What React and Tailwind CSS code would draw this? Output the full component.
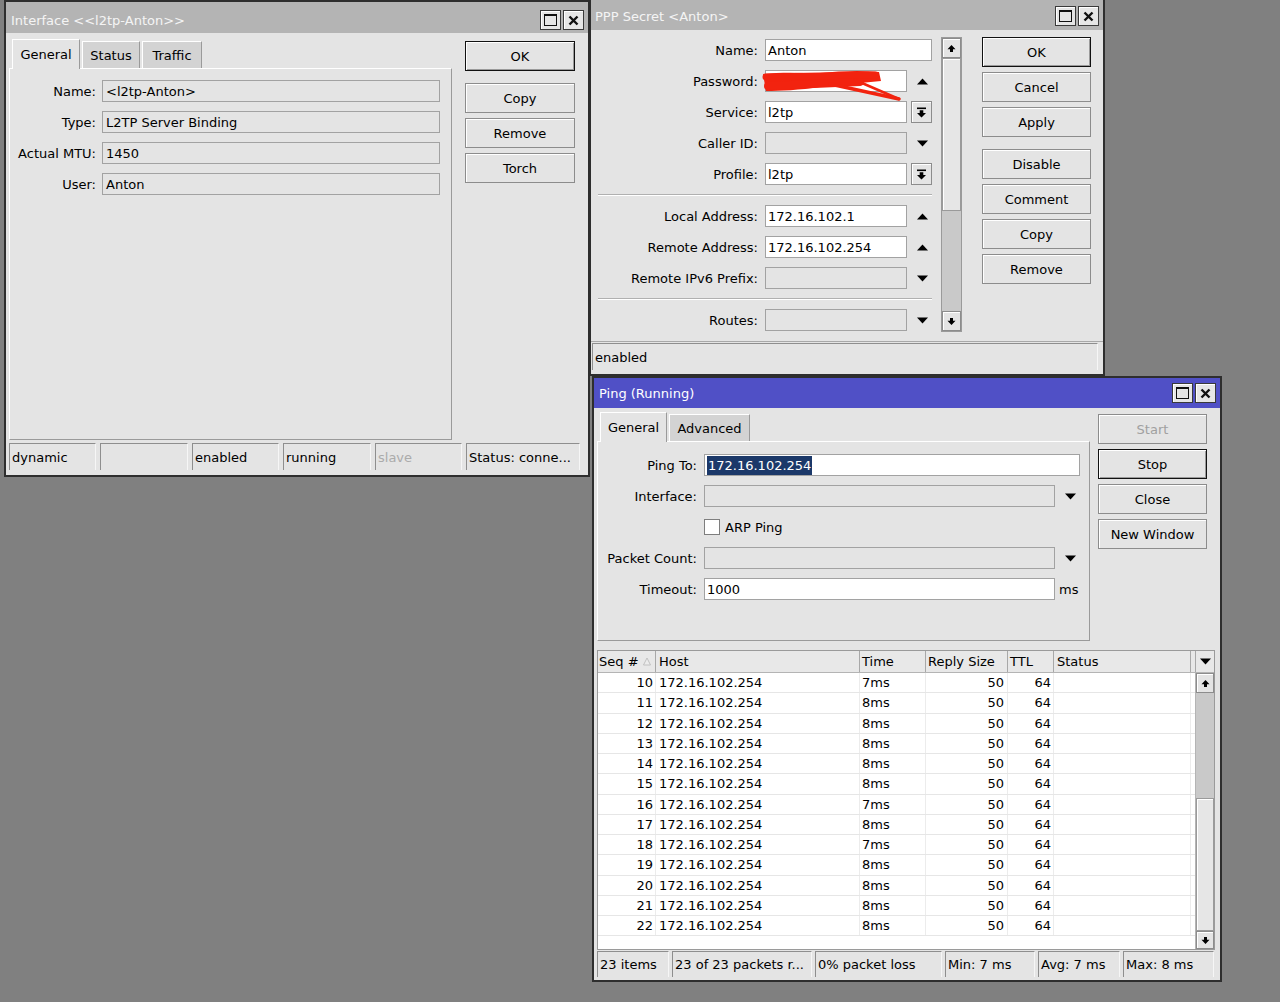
import React from "react";

function TitleButtons() {
  return (
    <div className="flex gap-[2px]">
      <div className="w-[21px] h-[20px] border border-[#3a3a3a] bg-[#e6e6e6] shadow-[inset_1px_1px_0_#ffffff] flex items-center justify-center">
        <div className="w-[13px] h-[12px] border-[1.5px] border-[#111111] border-t-[2px]" />
      </div>
      <div className="w-[21px] h-[20px] border border-[#3a3a3a] bg-[#e6e6e6] shadow-[inset_1px_1px_0_#ffffff] flex items-center justify-center">
        <svg width="11" height="11" viewBox="0 0 11 11">
          <path d="M1.5 1.5L9.5 9.5M9.5 1.5L1.5 9.5" stroke="#111" strokeWidth="2.4" />
        </svg>
      </div>
    </div>
  );
}

function Btn({ children, focus, disabled, mt = "" }) {
  return (
    <div
      className={`h-[30px] shrink-0 flex items-center justify-center bg-[#e4e4e4] border ${
        focus
          ? "border-[#111111] shadow-[inset_1px_1px_0_#ffffff,inset_-1px_-1px_0_#9a9a9a]"
          : "border-[#8c8c8c] shadow-[inset_1px_1px_0_#ffffff]"
      } ${disabled ? "text-[#a0a0a0]" : "text-black"} ${mt}`}
    >
      {children}
    </div>
  );
}

function Field({ w, white, children, cls = "" }) {
  return (
    <div
      className={`${w} h-[22px] shrink-0 border border-[#a2a2a2] ${
        white ? "bg-white" : "bg-[#e4e4e4]"
      } flex items-center pl-[2px] whitespace-nowrap overflow-hidden ${cls}`}
    >
      {children}
    </div>
  );
}

function Up() {
  return (
    <svg width="11" height="7" viewBox="0 0 11 7">
      <path d="M0 6.5L5.5 0.5L11 6.5Z" fill="#000" />
    </svg>
  );
}
function Down() {
  return (
    <svg width="11" height="7" viewBox="0 0 11 7">
      <path d="M0 0.5L5.5 6.5L11 0.5Z" fill="#000" />
    </svg>
  );
}
function DropBox() {
  return (
    <div className="ml-[4px] w-[21px] h-[22px] shrink-0 border border-[#8c8c8c] bg-[#e4e4e4] shadow-[inset_1px_1px_0_#ffffff] flex items-center justify-center">
      <svg width="11" height="11" viewBox="0 0 11 11">
        <rect x="1" y="0.5" width="9" height="1.6" fill="#000" />
        <path d="M3.7 3.2H7.3V6H10L5.5 10.5L1 6H3.7Z" fill="#000" />
      </svg>
    </div>
  );
}
function ScrollBtn({ up, h = "h-[20px]" }) {
  return (
    <div className={`w-full ${h} shrink-0 border border-[#8c8c8c] bg-[#e4e4e4] shadow-[inset_1px_1px_0_#ffffff] flex items-center justify-center`}>
      <svg width="9" height="9" viewBox="0 0 9 9">
        {up ? (
          <path d="M4.5 1L8.5 5.3H6V8H3V5.3H0.5Z" fill="#000" />
        ) : (
          <path d="M4.5 8L8.5 3.7H6V1H3V3.7H0.5Z" fill="#000" />
        )}
      </svg>
    </div>
  );
}

function Cell({ w, children, muted, h = "h-[27px]" }) {
  return (
    <div
      className={`${w} ${h} shrink-0 border-l border-t border-r border-[#8e8e8e] border-r-[#f6f6f6] flex items-center pl-[2px] whitespace-nowrap overflow-hidden ${
        muted ? "text-[#ababab]" : ""
      }`}
    >
      {children}
    </div>
  );
}

function TabOn({ w, children }) {
  return (
    <div className={`${w} h-[30px] shrink-0 bg-[#e4e4e4] border-t border-l border-r border-white border-r-[#9a9a9a] flex items-center justify-center relative z-10 -mb-px`}>
      {children}
    </div>
  );
}
function TabOff({ w, children }) {
  return (
    <div className={`${w} h-[27px] shrink-0 bg-[#d3d3d3] border-t border-l border-r border-white border-r-[#9a9a9a] flex items-center justify-center`}>
      {children}
    </div>
  );
}

const pings = [
  [10, "7ms"], [11, "8ms"], [12, "8ms"], [13, "8ms"], [14, "8ms"], [15, "8ms"], [16, "7ms"],
  [17, "8ms"], [18, "7ms"], [19, "8ms"], [20, "8ms"], [21, "8ms"], [22, "8ms"],
];

export default function App() {
  return (
    <div className="relative w-[1280px] h-[1002px] overflow-hidden bg-[#808080] font-['DejaVu_Sans',Verdana,sans-serif] text-[13px] text-black leading-none">
      {/* Window 1: Interface */}
      <div className="absolute left-[4px] top-0 w-[586px] h-[477px] border-2 border-[#2e2e2e] bg-[#e4e4e4] flex flex-col">
        <div className="h-[31px] shrink-0 bg-[#b4b4b4] flex items-center justify-between pt-[5px] pl-[5px] pr-[4px] text-[#f4f4f4]">
          <span>Interface &lt;&lt;l2tp-Anton&gt;&gt;</span>
          <TitleButtons />
        </div>
        <div className="flex-1 flex flex-col pl-[3px]">
          <div className="flex items-start">
            <div className="w-[443px] flex flex-col mt-[5px]">
              <div className="h-[30px] flex items-end gap-[2px] pl-[3px]">
                <TabOn w="w-[68px]">General</TabOn>
                <TabOff w="w-[58px]">Status</TabOff>
                <TabOff w="w-[60px]">Traffic</TabOff>
              </div>
              <div className="h-[372px] border border-white border-r-[#9a9a9a] border-b-[#9a9a9a] flex flex-col pt-[11px] gap-[9px]">
                {[
                  ["Name:", "<l2tp-Anton>"],
                  ["Type:", "L2TP Server Binding"],
                  ["Actual MTU:", "1450"],
                  ["User:", "Anton"],
                ].map(([l, v]) => (
                  <div key={l} className="flex items-center h-[22px]">
                    <div className="w-[86px] text-right shrink-0">{l}</div>
                    <Field w="w-[338px]" cls="ml-[6px] pl-[3px]">{v}</Field>
                  </div>
                ))}
              </div>
            </div>
            <div className="ml-[13px] w-[110px] flex flex-col mt-[8px]">
              <Btn focus>OK</Btn>
              <Btn mt="mt-[12px]">Copy</Btn>
              <Btn mt="mt-[5px]">Remove</Btn>
              <Btn mt="mt-[5px]">Torch</Btn>
            </div>
          </div>
          <div className="flex gap-[4px] mt-[3px]">
            <Cell w="w-[87px]">dynamic</Cell>
            <Cell w="w-[88px]"></Cell>
            <Cell w="w-[87px]">enabled</Cell>
            <Cell w="w-[88px]">running</Cell>
            <Cell w="w-[87px]" muted>slave</Cell>
            <Cell w="w-[114px]">Status: conne...</Cell>
          </div>
        </div>
      </div>

      {/* Window 2: PPP Secret */}
      <div className="absolute left-[589px] top-[-2px] w-[516px] h-[378px] border-2 border-[#2e2e2e] bg-[#e4e4e4] flex flex-col">
        <div className="h-[30px] shrink-0 bg-[#b4b4b4] flex items-center justify-between pt-[2px] pl-[4px] pr-[4px] text-[#f4f4f4]">
          <span>PPP Secret &lt;Anton&gt;</span>
          <TitleButtons />
        </div>
        <div className="flex-1 flex flex-col">
          <div className="h-[311px] shrink-0 flex items-start">
            <div className="w-[346px] flex flex-col">
              <div className="flex items-center h-[22px] mt-[9px]">
                <div className="w-[167px] text-right shrink-0">Name:</div>
                <Field w="w-[167px]" white cls="ml-[7px]">Anton</Field>
              </div>
              <div className="flex items-center h-[22px] mt-[9px]">
                <div className="w-[167px] text-right shrink-0">Password:</div>
                <div className="relative ml-[7px]">
                  <Field w="w-[142px]" white></Field>
                  <svg className="absolute left-[-5px] top-[-2px] overflow-visible" width="145" height="35" viewBox="0 0 145 35">
                    <path d="M3 6 C20 4, 40 5, 60 5 C80 3, 100 2, 119 4 L121 13 C100 15, 80 17, 60 19 C40 22, 20 23, 6 23 Z" fill="#f2230f" />
                    <path d="M6 9 L115 7" stroke="#f2230f" strokeWidth="7" fill="none" strokeLinecap="round" />
                    <path d="M8 18 L100 14" stroke="#f2230f" strokeWidth="8" fill="none" strokeLinecap="round" />
                    <path d="M70 16 L139 31" stroke="#f2230f" strokeWidth="3.5" fill="none" strokeLinecap="round" />
                    <path d="M95 12 L139 31" stroke="#f2230f" strokeWidth="2.5" fill="none" strokeLinecap="round" />
                  </svg>
                </div>
                <div className="w-[30px] flex justify-center"><Up /></div>
              </div>
              <div className="flex items-center h-[22px] mt-[9px]">
                <div className="w-[167px] text-right shrink-0">Service:</div>
                <Field w="w-[142px]" white cls="ml-[7px]">l2tp</Field>
                <DropBox />
              </div>
              <div className="flex items-center h-[22px] mt-[9px]">
                <div className="w-[167px] text-right shrink-0">Caller ID:</div>
                <Field w="w-[142px]" cls="ml-[7px]"></Field>
                <div className="w-[30px] flex justify-center"><Down /></div>
              </div>
              <div className="flex items-center h-[22px] mt-[9px]">
                <div className="w-[167px] text-right shrink-0">Profile:</div>
                <Field w="w-[142px]" white cls="ml-[7px]">l2tp</Field>
                <DropBox />
              </div>
              <div className="ml-[7px] w-[334px] h-[2px] mt-[9px] border-t border-b border-[#b0b0b0] border-b-white" />
              <div className="flex items-center h-[22px] mt-[9px]">
                <div className="w-[167px] text-right shrink-0">Local Address:</div>
                <Field w="w-[142px]" white cls="ml-[7px]">172.16.102.1</Field>
                <div className="w-[30px] flex justify-center"><Up /></div>
              </div>
              <div className="flex items-center h-[22px] mt-[9px]">
                <div className="w-[167px] text-right shrink-0">Remote Address:</div>
                <Field w="w-[142px]" white cls="ml-[7px]">172.16.102.254</Field>
                <div className="w-[30px] flex justify-center"><Up /></div>
              </div>
              <div className="flex items-center h-[22px] mt-[9px]">
                <div className="w-[167px] text-right shrink-0">Remote IPv6 Prefix:</div>
                <Field w="w-[142px]" cls="ml-[7px]"></Field>
                <div className="w-[30px] flex justify-center"><Down /></div>
              </div>
              <div className="ml-[7px] w-[334px] h-[2px] mt-[9px] border-t border-b border-[#b0b0b0] border-b-white" />
              <div className="flex items-center h-[22px] mt-[9px]">
                <div className="w-[167px] text-right shrink-0">Routes:</div>
                <Field w="w-[142px]" cls="ml-[7px]"></Field>
                <div className="w-[30px] flex justify-center"><Down /></div>
              </div>
            </div>
            <div className="ml-[4px] mt-[7px] w-[21px] h-[295px] flex flex-col border border-[#9a9a9a] bg-[#c9c9c9]">
              <ScrollBtn up />
              <div className="h-[153px] shrink-0 border border-[#9a9a9a] bg-[#e6e6e6] shadow-[inset_1px_1px_0_#ffffff]" />
              <div className="flex-1" />
              <ScrollBtn />
            </div>
            <div className="ml-[20px] mt-[7px] w-[109px] flex flex-col">
              <Btn focus>OK</Btn>
              <Btn mt="mt-[5px]">Cancel</Btn>
              <Btn mt="mt-[5px]">Apply</Btn>
              <Btn mt="mt-[12px]">Disable</Btn>
              <Btn mt="mt-[5px]">Comment</Btn>
              <Btn mt="mt-[5px]">Copy</Btn>
              <Btn mt="mt-[5px]">Remove</Btn>
            </div>
          </div>
          <div className="border-t border-[#a8a8a8] pt-[1px] pl-[1px]">
            <Cell w="w-[506px]">enabled</Cell>
          </div>
        </div>
      </div>

      {/* Window 3: Ping */}
      <div className="absolute left-[592px] top-[376px] w-[630px] h-[606px] border-2 border-[#2e2e2e] bg-[#e4e4e4] flex flex-col">
        <div className="h-[30px] shrink-0 bg-[#5050c6] flex items-center justify-between pl-[5px] pr-[4px] text-white">
          <span>Ping (Running)</span>
          <TitleButtons />
        </div>
        <div className="flex-1 flex flex-col pl-[3px]">
          <div className="flex items-start">
            <div className="w-[493px] flex flex-col mt-[3px]">
              <div className="h-[30px] flex items-end gap-[2px] pl-[3px]">
                <TabOn w="w-[67px]">General</TabOn>
                <TabOff w="w-[81px]">Advanced</TabOff>
              </div>
              <div className="h-[200px] border border-white border-r-[#9a9a9a] border-b-[#9a9a9a] flex flex-col pt-[12px] gap-[9px]">
                <div className="flex items-center h-[22px]">
                  <div className="w-[99px] text-right shrink-0">Ping To:</div>
                  <Field w="w-[376px]" white cls="ml-[7px] pl-[1px]">
                    <span className="inline-block h-[19px] leading-[19px] bg-[#1b3869] text-white px-[1px]">172.16.102.254</span>
                  </Field>
                </div>
                <div className="flex items-center h-[22px]">
                  <div className="w-[99px] text-right shrink-0">Interface:</div>
                  <Field w="w-[351px]" cls="ml-[7px]"></Field>
                  <div className="w-[30px] flex justify-center"><Down /></div>
                </div>
                <div className="flex items-center h-[22px]">
                  <div className="w-[99px] shrink-0"></div>
                  <div className="ml-[7px] w-[16px] h-[16px] border border-[#7e7e7e] bg-white" />
                  <span className="ml-[5px]">ARP Ping</span>
                </div>
                <div className="flex items-center h-[22px]">
                  <div className="w-[99px] text-right shrink-0">Packet Count:</div>
                  <Field w="w-[351px]" cls="ml-[7px]"></Field>
                  <div className="w-[30px] flex justify-center"><Down /></div>
                </div>
                <div className="flex items-center h-[22px]">
                  <div className="w-[99px] text-right shrink-0">Timeout:</div>
                  <Field w="w-[351px]" white cls="ml-[7px]">1000</Field>
                  <span className="ml-[4px]">ms</span>
                </div>
              </div>
            </div>
            <div className="ml-[8px] mt-[6px] w-[109px] flex flex-col">
              <Btn disabled>Start</Btn>
              <Btn focus mt="mt-[5px]">Stop</Btn>
              <Btn mt="mt-[5px]">Close</Btn>
              <Btn mt="mt-[5px]">New Window</Btn>
            </div>
          </div>

          <div className="mt-[9px] w-[618px] h-[300px] border border-[#9a9a9a] bg-white flex flex-col">
            <div className="h-[22px] shrink-0 flex bg-[#e8e8e8] border-b border-[#b4b4b4]">
              <div className="w-[58px] shrink-0 border-r border-[#a8a8a8] flex items-center pl-[1px]">
                <span>Seq #</span>
                <svg className="ml-auto mr-[4px]" width="8" height="9" viewBox="0 0 8 9">
                  <path d="M4 1L7.5 8H0.5Z" fill="#ececec" stroke="#b8b8b8" strokeWidth="0.8" />
                </svg>
              </div>
              <div className="w-[204px] shrink-0 border-r border-[#a8a8a8] flex items-center pl-[3px]">Host</div>
              <div className="w-[66px] shrink-0 border-r border-[#a8a8a8] flex items-center pl-[2px]">Time</div>
              <div className="w-[82px] shrink-0 border-r border-[#a8a8a8] flex items-center pl-[2px]">Reply Size</div>
              <div className="w-[46px] shrink-0 border-r border-[#a8a8a8] flex items-center pl-[2px]">TTL</div>
              <div className="w-[137px] shrink-0 border-r border-[#a8a8a8] flex items-center pl-[3px]">Status</div>
              <div className="w-[4px] shrink-0" />
              <div className="w-[19px] shrink-0 border-l border-[#a8a8a8] flex items-center justify-center"><Down /></div>
            </div>
            <div className="flex-1 flex">
              <div className="w-[597px] flex flex-col">
                {pings.map(([n, t]) => (
                  <div key={n} className="h-[20.25px] shrink-0 flex border-b border-[#e6e6e6]">
                    <div className="w-[58px] shrink-0 border-r border-[#ececec] flex items-center justify-end pr-[2px]">{n}</div>
                    <div className="w-[204px] shrink-0 border-r border-[#ececec] flex items-center pl-[3px]">172.16.102.254</div>
                    <div className="w-[66px] shrink-0 border-r border-[#ececec] flex items-center pl-[2px]">{t}</div>
                    <div className="w-[82px] shrink-0 border-r border-[#ececec] flex items-center justify-end pr-[3px]">50</div>
                    <div className="w-[46px] shrink-0 border-r border-[#ececec] flex items-center justify-end pr-[2px]">64</div>
                    <div className="w-[137px] shrink-0 border-r border-[#ececec]" />
                  </div>
                ))}
              </div>
              <div className="w-[19px] flex flex-col bg-[#c9c9c9] border-l border-[#b4b4b4]">
                <ScrollBtn up />
                <div className="h-[105px] shrink-0" />
                <div className="flex-1 border border-[#9a9a9a] bg-[#e6e6e6] shadow-[inset_1px_1px_0_#ffffff]" />
                <ScrollBtn h="h-[18px]" />
              </div>
            </div>
          </div>

          <div className="flex gap-[3px] mt-[1px]">
            <Cell w="w-[72px]" h="h-[26px]">23 items</Cell>
            <Cell w="w-[140px]" h="h-[26px]">23 of 23 packets r...</Cell>
            <Cell w="w-[127px]" h="h-[26px]">0% packet loss</Cell>
            <Cell w="w-[90px]" h="h-[26px]">Min: 7 ms</Cell>
            <Cell w="w-[82px]" h="h-[26px]">Avg: 7 ms</Cell>
            <Cell w="w-[91px]" h="h-[26px]">Max: 8 ms</Cell>
          </div>
        </div>
      </div>
    </div>
  );
}
